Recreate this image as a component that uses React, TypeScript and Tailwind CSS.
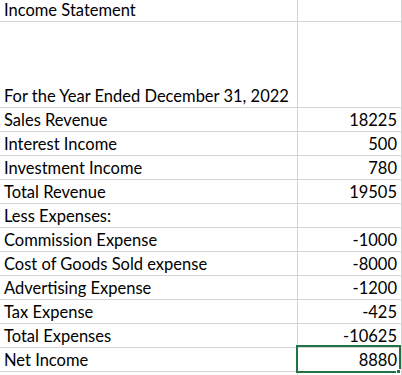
const rows: [string, string][] = [
  ['Sales Revenue', '18225'],
  ['Interest Income', '500'],
  ['Investment Income', '780'],
  ['Total Revenue', '19505'],
  ['Less Expenses:', ''],
  ['Commission Expense', '-1000'],
  ['Cost of Goods Sold expense', '-8000'],
  ['Advertising Expense', '-1200'],
  ['Tax Expense', '-425'],
  ['Total Expenses', '-10625'],
]

function Row({ label, value, height = 'h-[24px]', selected = false }: { label: string; value: string; height?: string; selected?: boolean }) {
  return (
    <div className={`flex ${height} border-b border-[#d4d4d4]`}>
      <div className="flex w-[298px] items-end border-r border-[#d4d4d4] pb-[1px] pl-[4px]">{label}</div>
      <div className="relative flex w-[104px] items-end justify-end border-r border-[#d4d4d4] pb-[1px] pr-[4px]">
        {value}
        {selected && (
          <>
            <div className="absolute -left-[2px] -top-[3px] -bottom-[2px] right-0 border-2 border-[#217346]" />
            <div className="absolute -bottom-[3px] right-[0px] h-[5px] w-[5px] border border-white bg-[#217346]" />
          </>
        )}
      </div>
    </div>
  )
}

export default function App() {
  return (
    <div className="h-[375px] w-[402px] overflow-hidden bg-white text-[16.5px] leading-[20px] text-black" style={{ fontFamily: 'Lato, "Open Sans", sans-serif' }}>
      <Row label="Income Statement" value="" height="h-[22px]" />
      <Row label="For the Year Ended December 31, 2022" value="" height="h-[86px]" />
      {rows.map(([label, value]) => (
        <Row key={label} label={label} value={value} />
      ))}
      <Row label="Net Income" value="8880" selected />
      <Row label="" value="" />
    </div>
  )
}
